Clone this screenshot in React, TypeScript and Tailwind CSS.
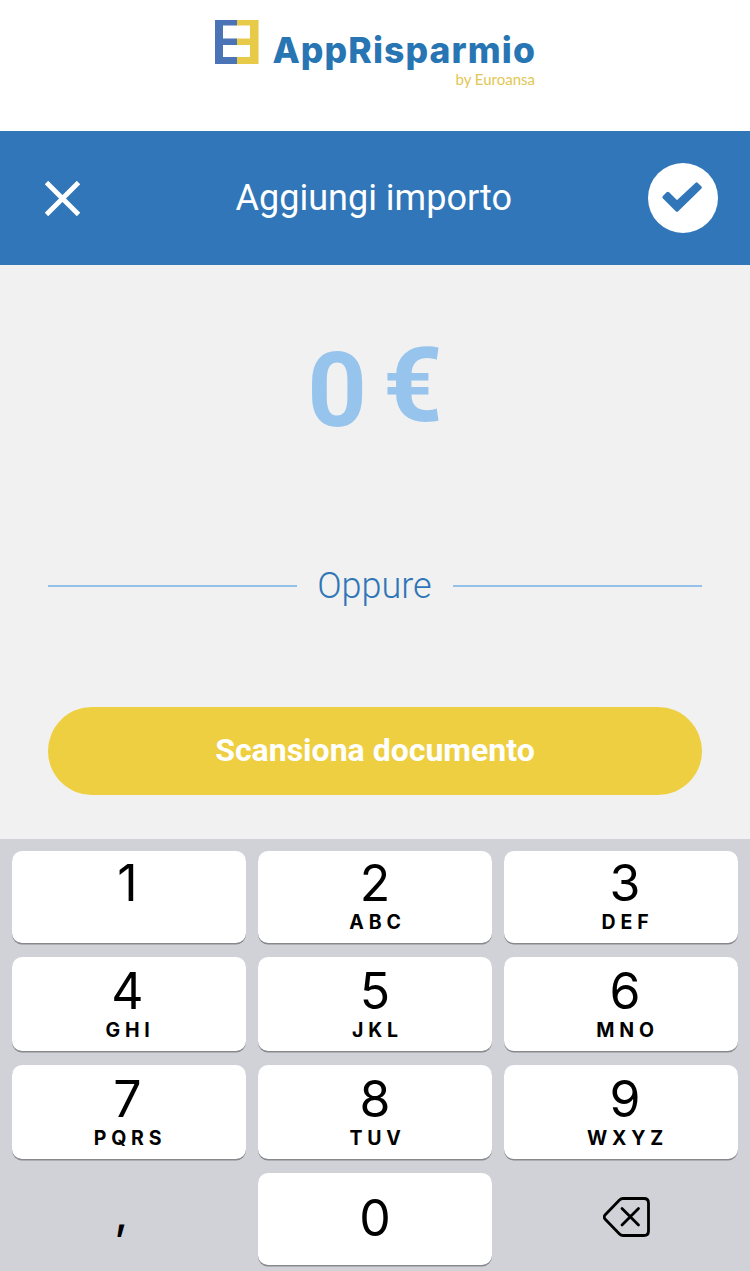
import { useState } from "react"

type Key = {
  digit: string
  letters?: string
}

const ROWS: { height: string; keys: Key[] }[] = [
  {
    height: "h-[92px]",
    keys: [{ digit: "1" }, { digit: "2", letters: "ABC" }, { digit: "3", letters: "DEF" }],
  },
  {
    height: "h-[94px]",
    keys: [
      { digit: "4", letters: "GHI" },
      { digit: "5", letters: "JKL" },
      { digit: "6", letters: "MNO" },
    ],
  },
  {
    height: "h-[94px]",
    keys: [
      { digit: "7", letters: "PQRS" },
      { digit: "8", letters: "TUV" },
      { digit: "9", letters: "WXYZ" },
    ],
  },
]

// labels in the outer columns sit slightly off the key's centre
const COLUMN_PADDING = ["pr-[3px]", "", "pl-2"]

export default function App() {
  const [amount, setAmount] = useState("0")

  function press(key: string) {
    setAmount((a) => {
      if (key === "," && a.includes(",")) return a
      return a === "0" && key !== "," ? key : a + key
    })
  }

  function erase() {
    setAmount((a) => (a.length > 1 ? a.slice(0, -1) : "0"))
  }

  return (
    <div className="flex h-[1271px] w-[750px] flex-col overflow-hidden bg-[#f1f1f1] font-[Roboto,sans-serif]">
      <Brand />
      <Header onClose={() => setAmount("0")} />

      <main className="flex h-[574px] flex-col px-12">
        <div className="flex justify-center pt-[65px] text-[104px] leading-[122px] font-bold text-[#97c4ed]">
          <span>{amount}</span>
          <span className="relative -top-[5px] ml-[16px]">€</span>
        </div>

        <div className="mt-[109px] flex h-[50px] items-center">
          <div className="h-0.5 flex-1 bg-[#94c1e9]" />
          <span className="w-[156px] pr-px text-center text-[36px] font-light text-[#2f76b8]">
            Oppure
          </span>
          <div className="h-0.5 flex-1 bg-[#94c1e9]" />
        </div>

        <button className="mt-24 h-[88px] rounded-full bg-[#eecf41] pb-0.5 text-[32px] font-bold text-white">
          Scansiona documento
        </button>
      </main>

      <Keypad onPress={press} onErase={erase} />
    </div>
  )
}

function Brand() {
  return (
    <div className="flex h-[131px] justify-center bg-white pt-5">
      <svg width="44" height="44" viewBox="0 0 44 44" className="shrink-0">
        <path fill="#4a74b5" d="M0 0h22v5.500H8v13h14V25H8v12h14v7H0z" />
        <path fill="#e6ca48" d="M22 0h21.500v44H22v-7h13V25H22v-6.500h13v-13H22z" />
      </svg>
      <div className="ml-[14px] flex w-[262px] flex-col items-end pt-2.5">
        <span className="-mr-px text-[35.500px] leading-[42px] font-extrabold tracking-[1.100px] whitespace-nowrap text-[#2875b3] font-[Inter,sans-serif]">
          AppRisparmio
        </span>
        <span className="-mt-0.5 text-[15px] leading-[18px] whitespace-nowrap text-[#e2c653] font-[Lato,sans-serif]">
          by Euroansa
        </span>
      </div>
    </div>
  )
}

function Header({ onClose }: { onClose: () => void }) {
  return (
    <header className="flex h-[134px] items-center justify-between bg-[#3076b8] pr-8 pl-[44.5px]">
      <button onClick={onClose} aria-label="Chiudi" className="w-[55px]">
        <svg width="35" height="35" viewBox="0 0 35 35">
          <path d="M1.500 1.500l32 32M33.500 1.500l-32 32" stroke="#fff" strokeWidth="4.800" />
        </svg>
      </button>
      <h1 className="text-[36px] text-white">Aggiungi importo</h1>
      <button
        aria-label="Conferma"
        className="flex size-[70px] items-center justify-center rounded-full bg-white"
      >
        <svg width="40" height="30" viewBox="0 0 40 30" className="mr-0.5 mb-[3px]">
          <path
            fill="#3076b8"
            stroke="#3076b8"
            strokeWidth="3.500"
            strokeLinejoin="round"
            d="M2.200 15.200L5.800 11.600L15 20.600L34.600 2.200L38 5.600L15 28z"
          />
        </svg>
      </button>
    </header>
  )
}

function Keypad({
  onPress,
  onErase,
}: {
  onPress: (key: string) => void
  onErase: () => void
}) {
  return (
    <div className="flex flex-1 flex-col gap-[14px] bg-[#d1d2d8] px-3 pt-3 font-[Inter,sans-serif] text-black">
      {ROWS.map((row) => (
        <div key={row.keys[0].digit} className={`grid grid-cols-3 gap-3 ${row.height}`}>
          {row.keys.map((k, i) => (
            <button
              key={k.digit}
              onClick={() => onPress(k.digit)}
              className={`flex flex-col items-center justify-end rounded-[10px] bg-white pb-2 shadow-[0_1.5px_0_#88898d] ${COLUMN_PADDING[i]}`}
            >
              <span className="text-[50px] leading-[52px]">{k.digit}</span>
              <span className="h-[26px] pl-[5px] text-[19.500px] leading-[26px] font-bold tracking-[4.800px]">
                {k.letters}
              </span>
            </button>
          ))}
        </div>
      ))}
      <div className="grid h-[92px] grid-cols-3 gap-3">
        <button onClick={() => onPress(",")} className="pr-[15px] pb-3 text-[44px] font-medium">
          ,
        </button>
        <button
          onClick={() => onPress("0")}
          className="rounded-[10px] bg-white pb-0.5 text-[50px] shadow-[0_1.5px_0_#88898d]"
        >
          0
        </button>
        <button
          onClick={onErase}
          aria-label="Cancella"
          className="flex items-center justify-center pb-[5px] pl-[11px]"
        >
          <svg
            width="48"
            height="40"
            viewBox="0 0 48 40"
            fill="none"
            stroke="#000"
            strokeWidth="2.800"
            strokeLinecap="round"
            strokeLinejoin="round"
          >
            <path d="M20 1.500h21q4.500 0 4.500 4.500v28q0 4.500-4.500 4.500H20q-2 0-3.500-1.500L2 22q-1.500-2 0-4L16.500 3Q18 1.500 20 1.500z" />
            <path d="M19 11.500l16.500 16.500M35.500 11.500L19 28" />
          </svg>
        </button>
      </div>
    </div>
  )
}
